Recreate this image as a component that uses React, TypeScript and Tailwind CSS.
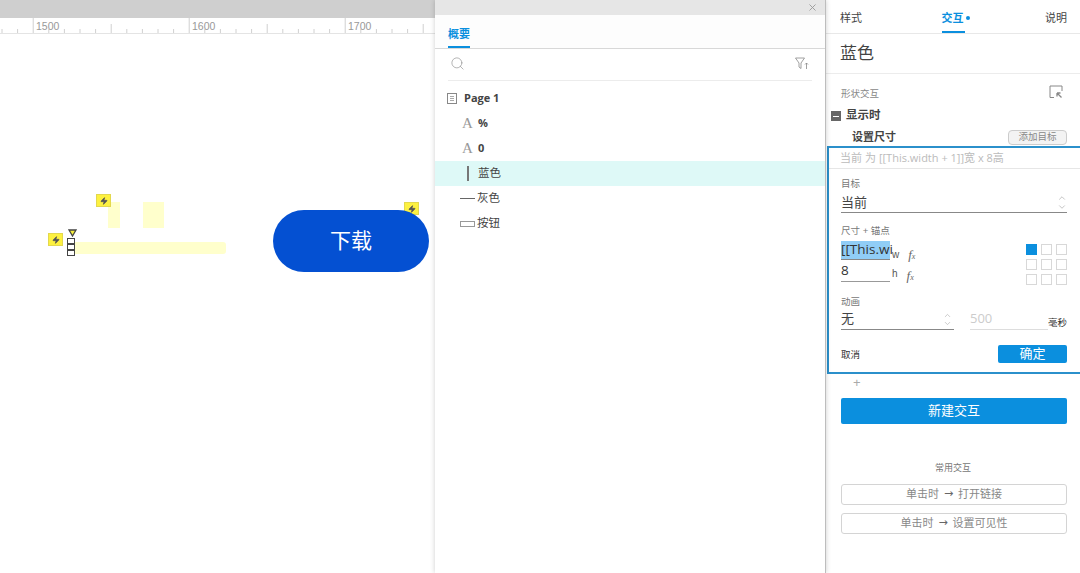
import { ChevronDown, ChevronUp, Search, X, Zap } from "lucide-react";

const cjk = '"Liberation Sans", "Noto Sans CJK SC", sans-serif';

function Bolt({ className }: { className: string }) {
  return (
    <div className={`absolute flex h-[13px] w-[15px] items-center justify-center border border-[#e3d84e] bg-[#fdf140] ${className}`}>
      <Zap size={8} className="fill-[#555] text-[#555]" />
    </div>
  );
}

function Ruler() {
  const ticks = Array.from({ length: 44 }, (_, i) => i);
  return (
    <svg className="h-[15px] w-full" viewBox="0 0 435 15">
      {ticks.map((i) => {
        const x = 2 + i * 15.6;
        const major = (i - 2) % 10 === 0 && i >= 2;
        const mid = (i - 2) % 5 === 0;
        return (
          <line
            key={i}
            x1={x}
            x2={x}
            y1={major ? 0 : mid ? 6 : 11}
            y2={15}
            stroke="#d0d0d0"
            strokeWidth="1"
          />
        );
      })}
      <text x="36" y="12" fontSize="10.500" fill="#999" fontFamily="Liberation Sans">1500</text>
      <text x="192" y="12" fontSize="10.500" fill="#999" fontFamily="Liberation Sans">1600</text>
      <text x="348" y="12" fontSize="10.500" fill="#999" fontFamily="Liberation Sans">1700</text>
    </svg>
  );
}

function Canvas() {
  return (
    <div className="flex w-[435px] shrink-0 flex-col bg-white">
      <div className="h-[18px] bg-[#cfcfcf]" />
      <div className="h-[16px] border-b border-[#e4e4e4]">
        <Ruler />
      </div>
      <div className="relative flex-1">
        <div className="absolute left-[108px] top-[168px] h-[26px] w-[12px] bg-[#ffffcc]" />
        <div className="absolute left-[143px] top-[168px] h-[26px] w-[21px] bg-[#ffffcc]" />
        <div className="absolute left-[75px] top-[208px] h-[12px] w-[151px] rounded-r-[3px] bg-[#ffffcc]" />
        <Bolt className="left-[96px] top-[160px]" />
        <Bolt className="left-[48px] top-[199px]" />
        <Bolt className="left-[404px] top-[168px]" />
        <svg className="absolute left-[68px] top-[195px] h-[8px] w-[9px]" viewBox="0 0 9 8">
          <path d="M1 1h7L4.500 7z" fill="#f6ee3c" stroke="#444" strokeWidth="1.300" />
        </svg>
        <div className="absolute left-[67px] top-[204px] flex flex-col">
          <div className="h-[6px] w-[8px] border border-[#444] bg-white" />
          <div className="h-[6px] w-[8px] border border-[#444] bg-white" />
          <div className="h-[6px] w-[8px] border border-[#444] bg-white" />
        </div>
        <div className="absolute left-[273px] top-[176px] flex h-[62px] w-[156px] items-center justify-center rounded-[31px] bg-[#0450d2] text-[21px] text-white">
          下载
        </div>
      </div>
    </div>
  );
}

function TreeRow({
  icon,
  label,
  active,
  pad,
  bold,
}: {
  icon: React.ReactNode;
  label: string;
  active?: boolean;
  pad: string;
  bold?: boolean;
}) {
  return (
    <div className={`flex h-[25px] items-center ${pad} ${active ? "bg-[#def9f7]" : ""}`}>
      {icon}
      <span className={`text-[11.500px] text-[#444] ${bold ? "font-['Open_Sans'] text-[11px] font-bold" : ""}`}>{label}</span>
    </div>
  );
}

function LetterIcon() {
  return (
    <span className="w-[16px] font-['Liberation_Serif'] text-[15px] leading-none text-[#999]">A</span>
  );
}

function Outline() {
  return (
    <div className="z-10 flex w-[391px] shrink-0 flex-col border-r border-[#bdbdbd] bg-white shadow-[0_0_5px_rgba(0,0,0,0.2)]">
      <div className="flex h-[15px] items-center justify-end bg-[#e6e6e6] pr-[7px]">
        <X size={11} className="text-[#999]" />
      </div>
      <div className="flex h-[34px] items-end border-b border-[#d8d8d8] bg-[#fdfdfd] pl-[13px]">
        <div className="border-b-2 border-[#0b8fde] pb-[5px] text-[11px] font-bold leading-[14px] text-[#0b8fde]">
          概要
        </div>
      </div>
      <div className="mx-[13px] flex h-[32px] items-center justify-between border-b border-[#ececec] pb-[2px] pl-[2px] pr-[3px]">
        <Search size={15} strokeWidth={1} className="text-[#888]" />
        <svg width="14" height="13" viewBox="0 0 14 13" fill="none" stroke="#888" strokeWidth="0.800">
          <path d="M0.500 1h9L6 6v5.500L4 10V6z" />
          <path d="M11.500 12V6M10 7.500l1.500-1.500 1.500 1.500" />
        </svg>
      </div>
      <div className="pt-[5px]">
        <TreeRow
          pad="pl-[12px]"
          bold
          label="Page 1"
          icon={
            <div className="mr-[7px] flex h-[11px] w-[10px] flex-col justify-center gap-[1px] border border-[#888] px-[2px]">
              <div className="h-px bg-[#aaa]" />
              <div className="h-px bg-[#aaa]" />
              <div className="h-px bg-[#aaa]" />
            </div>
          }
        />
        <TreeRow pad="pl-[27px]" bold label="%" icon={<LetterIcon />} />
        <TreeRow pad="pl-[27px]" bold label="0" icon={<LetterIcon />} />
        <TreeRow
          pad="pl-[32px]"
          active
          label="蓝色"
          icon={<div className="mr-[9px] h-[15px] w-[2px] bg-[#777]" />}
        />
        <TreeRow
          pad="pl-[25px]"
          label="灰色"
          icon={<div className="mr-[2px] h-px w-[15px] bg-[#666]" />}
        />
        <TreeRow
          pad="pl-[25px]"
          label="按钮"
          icon={<div className="mr-[2px] h-[6px] w-[15px] border border-[#999]" />}
        />
      </div>
    </div>
  );
}

function Field({ label, children }: { label: string; children: React.ReactNode }) {
  return (
    <div>
      <div className="text-[9.500px] leading-[14px] text-[#777]">{label}</div>
      {children}
    </div>
  );
}

function AnchorGrid() {
  const cells = [0, 1, 2, 3, 4, 5, 6, 7, 8];
  return (
    <div className="grid grid-cols-3 gap-x-[4px] gap-y-[4px]">
      {cells.map((c) => (
        <div
          key={c}
          className={`h-[11px] w-[11px] border ${c === 0 ? "border-[#0b8fde] bg-[#0b8fde]" : "border-[#d8d8d8] bg-white"}`}
        />
      ))}
    </div>
  );
}

function Fx({ className }: { className: string }) {
  return (
    <span className={`font-['Liberation_Serif'] text-[13px] italic leading-[14px] text-[#666] ${className}`}>
      f<span className="text-[8px]">x</span>
    </span>
  );
}

function SizeEditor() {
  return (
    <div className="border-2 border-r-0 border-[#2b90cb] bg-white">
      <div className="flex h-[21px] items-center border-b border-[#e6e6e6] pl-[11px] font-['Open_Sans'] text-[11px] text-[#bbb]">
        <span style={{ fontFamily: cjk }}>当前 为</span>&nbsp;[[This.width + 1]]<span style={{ fontFamily: cjk }}>宽</span>&nbsp;x 8<span style={{ fontFamily: cjk }}>高</span>
      </div>
      <div className="pl-[12px] pr-[13px] pt-[8px]">
        <Field label="目标">
          <div className="flex h-[22px] items-center justify-between border-b border-[#888] pt-[2px] text-[13px] text-[#444]">
            当前
            <div className="flex flex-col">
              <ChevronUp size={10} className="-mb-px text-[#bbb]" />
              <ChevronDown size={10} className="text-[#bbb]" />
            </div>
          </div>
        </Field>
        <div className="mt-[11px]">
          <Field label="尺寸 + 锚点">
            <div className="mt-[3px] flex items-start justify-between">
              <div>
                <div className="flex h-[19px] items-end">
                  <div className="h-[19px] w-[49px] border-b border-[#888] bg-[#90cdf6] font-['Open_Sans'] text-[13.500px] leading-[17px] text-[#333]">
                    [[This.wi
                  </div>
                  <span className="ml-[2px] text-[10px] leading-[10px] text-[#555]">w</span>
                  <Fx className="ml-[9px] -mb-[4px]" />
                </div>
                <div className="mt-[2px] flex h-[20px] items-end">
                  <div className="h-[20px] w-[49px] border-b border-[#999] font-['Open_Sans'] text-[13.500px] leading-[17px] text-[#333]">8</div>
                  <span className="ml-[2px] text-[10px] leading-[16px] text-[#555]">h</span>
                  <Fx className="ml-[9px] -mb-[3px]" />
                </div>
              </div>
              <div className="pt-[3px]">
                <AnchorGrid />
              </div>
            </div>
          </Field>
        </div>
        <div className="mt-[10px]">
          <Field label="动画">
            <div className="flex h-[21px] items-end">
              <div className="flex h-[21px] w-[113px] items-center justify-between border-b border-[#888] pr-[2px] text-[13px] text-[#444]">
                无
                <div className="flex flex-col">
                  <ChevronUp size={9} className="-mb-px text-[#bbb]" />
                  <ChevronDown size={9} className="text-[#bbb]" />
                </div>
              </div>
              <div className="ml-[16px] flex h-[21px] w-[78px] items-center border-b border-[#ddd] font-['Open_Sans'] text-[13px] text-[#ccc]">
                500
              </div>
              <span className="whitespace-nowrap text-[9.500px] leading-[14px] text-[#333]">毫秒</span>
            </div>
          </Field>
        </div>
        <div className="mt-[15px] flex h-[18px] items-center justify-between">
          <span className="pt-[2px] text-[9.500px] text-[#333]">取消</span>
          <div className="flex h-[18px] w-[69px] items-center justify-center rounded-[2px] bg-[#0b8fde] text-[13px] text-white">
            确定
          </div>
        </div>
      </div>
      <div className="h-[9px]" />
    </div>
  );
}

function Inspector() {
  return (
    <div className="flex min-w-0 flex-1 flex-col bg-white">
      <div className="flex h-[34px] justify-between border-b border-[#e8e8e8] pl-[14px] pr-[13px]">
        <span className="pt-[11px] text-[11px] leading-[14px] text-[#444]">样式</span>
        <div className="relative ml-[4px] flex h-[33px] items-start pt-[11px]">
          <span className="text-[11px] font-bold leading-[14px] text-[#0b8fde]">交互</span>
          <span className="ml-[2px] mt-[5px] h-[4px] w-[4px] rounded-full bg-[#0b8fde]" />
          <div className="absolute bottom-0 left-0 h-[2px] w-[23px] bg-[#0b8fde]" />
        </div>
        <span className="pt-[11px] text-[11px] leading-[14px] text-[#444]">说明</span>
      </div>
      <div className="flex h-[40px] items-center border-b border-[#ececec] pl-[14px] text-[17px] text-[#444]">
        蓝色
      </div>
      <div className="flex h-[30px] items-end justify-between pb-[3px] pl-[15px] pr-[17px]">
        <span className="text-[9.500px] leading-[14px] text-[#888]">形状交互</span>
        <svg width="14" height="14" viewBox="0 0 14 14" fill="none" stroke="#888" className="mb-[2px]">
          <path d="M5 12.500H1V1h12v5" />
          <path d="M8 8l4.500 4.500M8 8v3.500M8 8h3.500" strokeWidth="1.300" />
        </svg>
      </div>
      <div className="mt-[2px] flex h-[20px] items-center pl-[5px]">
        <div className="mr-[5px] flex h-[10px] w-[10px] items-center justify-center bg-[#666]">
          <div className="h-px w-[6px] bg-white" />
        </div>
        <span className="text-[11.500px] font-bold text-[#444]">显示时</span>
      </div>
      <div className="mt-[2px] flex h-[18px] items-center justify-between pl-[26px] pr-[13px]">
        <span className="text-[11px] font-bold text-[#444]">设置尺寸</span>
        <div className="flex h-[15px] w-[59px] items-center justify-center rounded-[4px] border border-[#ccc] bg-[#f3f3f3] text-[9.500px] text-[#888]">
          添加目标
        </div>
      </div>
      <div className="ml-px">
        <SizeEditor />
      </div>
      <div className="pl-[27px] text-[13px] leading-[17px] text-[#aaa]">+</div>
      <div className="ml-[15px] mr-[13px] mt-[7px] flex h-[26px] items-center justify-center rounded-[2px] bg-[#0b8fde] text-[13px] text-white">
        新建交互
      </div>
      <div className="mt-[37px] text-center text-[9px] leading-[14px] text-[#777]">常用交互</div>
      <div className="ml-[15px] mr-[13px] mt-[9px] flex flex-col gap-[8px]">
        <div className="flex h-[21px] items-center justify-center rounded-[3px] border border-[#d4d4d4] text-[11px] text-[#888]">
          单击时<span className="mx-[5px] font-['DejaVu_Sans'] text-[#666]">→</span>打开链接
        </div>
        <div className="flex h-[21px] items-center justify-center rounded-[3px] border border-[#d4d4d4] text-[11px] text-[#888]">
          单击时<span className="mx-[5px] font-['DejaVu_Sans'] text-[#666]">→</span>设置可见性
        </div>
      </div>
    </div>
  );
}

export default function App() {
  return (
    <div className="flex h-[573px] w-[1080px] overflow-hidden bg-white" style={{ fontFamily: cjk }}>
      <Canvas />
      <Outline />
      <Inspector />
    </div>
  );
}
